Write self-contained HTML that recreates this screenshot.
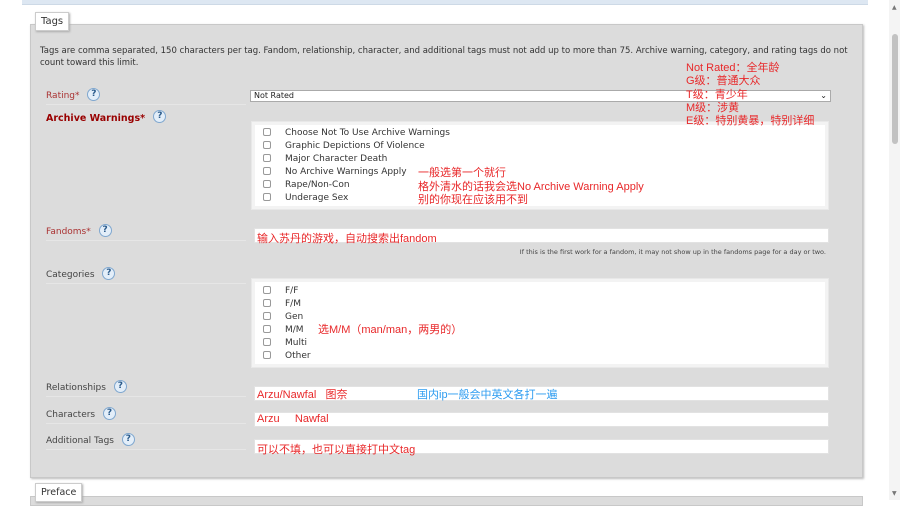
<!DOCTYPE html>
<html><head><meta charset="utf-8"><style>
*{margin:0;padding:0;box-sizing:border-box}
body{width:900px;height:500px;background:#fff;position:relative;overflow:hidden;font-family:"DejaVu Sans","Liberation Sans",sans-serif;color:#333}
.a{position:absolute}
.panel{left:30px;top:24px;width:833px;height:454px;background:#dcdcdc;border:1px solid #c8c8c8;box-shadow:1px 1px 2px #bbb}
.tab{background:#fff;border:1px solid #ccc;box-shadow:1px 1px 2px #aaa;font-size:10px;color:#333;padding:3px 5px}
.lbl{font-size:9px;color:#444;left:46px;width:200px;border-bottom:1px solid #e6e6e6;height:14px}
.q{display:inline-block;width:13px;height:13px;border-radius:50%;border:1px solid #7fa7cf;background:#e3eef9;color:#2a5a8a;font-size:9px;line-height:11px;text-align:center;font-weight:bold;vertical-align:top;margin-left:5px;margin-top:-3px}
.box{background:#fff;border:1px solid #e8e8e8;box-shadow:inset 0 0 0 3px #f3f3f3}
.inp{background:#fff;border:1px solid #e2e2e2;height:15px}
.cb{position:absolute;left:263px;width:8px;height:8px;border:1px solid #999;border-radius:2px;background:#fff}
.ct{position:absolute;left:285px;font-size:9px;color:#333;white-space:nowrap}
.r{color:#e8282a;font-family:"Liberation Sans","Noto Sans CJK SC",sans-serif;font-size:11px;white-space:nowrap;position:absolute}
.b{color:#2d9cf0}
</style></head><body>
<div class="a" style="left:22px;top:0;width:846px;height:5px;background:#dde7f2;border-bottom:1px solid #cdd9e6"></div>
<div class="a" style="left:889px;top:0;width:11px;height:500px;background:#f4f4f4"></div>
<div class="a" style="left:892px;top:34px;width:6px;height:110px;background:#c2c2c2;border-radius:3px"></div>
<div class="a" style="left:892px;top:4px;font-size:6px;color:#777">▲</div>
<div class="a" style="left:892px;top:490px;font-size:6px;color:#777">▼</div>

<div class="a panel"></div>
<div class="a tab" style="left:35px;top:12px">Tags</div>

<div class="a" style="left:40px;top:45px;width:815px;font-size:8.5px;line-height:12px;color:#333">Tags are comma separated, 150 characters per tag. Fandom, relationship, character, and additional tags must not add up to more than 75. Archive warning, category, and rating tags do not count toward this limit.</div>

<div class="a lbl" style="top:91px;color:#a33">Rating* <span class="q">?</span></div>
<div class="a" style="left:250px;top:90px;width:581px;height:12px;background:#fff;border:1px solid #aaa;font-size:8px;padding-left:3px;line-height:10px;color:#222">Not Rated<span style="position:absolute;right:3px;top:0">⌄</span></div>

<div class="a lbl" style="top:113px;color:#900;font-weight:bold;font-size:9.5px;border:none">Archive Warnings* <span class="q" style="font-weight:bold">?</span></div>
<div class="a box" style="left:251px;top:121px;width:578px;height:89px"></div>
<div class="cb" style="top:128px"></div><div class="ct" style="top:128px">Choose Not To Use Archive Warnings</div>
<div class="cb" style="top:141px"></div><div class="ct" style="top:141px">Graphic Depictions Of Violence</div>
<div class="cb" style="top:154px"></div><div class="ct" style="top:154px">Major Character Death</div>
<div class="cb" style="top:167px"></div><div class="ct" style="top:167px">No Archive Warnings Apply</div>
<div class="cb" style="top:180px"></div><div class="ct" style="top:180px">Rape/Non-Con</div>
<div class="cb" style="top:193px"></div><div class="ct" style="top:193px">Underage Sex</div>

<div class="r" style="left:686px;top:62px;line-height:13.3px">Not Rated：全年龄<br>G级：普通大众<br>T级：青少年<br>M级：涉黄<br>E级：特别黄暴，特别详细</div>
<div class="r" style="left:418px;top:167px;line-height:13.5px">一般选第一个就行<br>格外清水的话我会选No Archive Warning Apply<br>别的你现在应该用不到</div>

<div class="a lbl" style="top:227px;color:#a33">Fandoms* <span class="q">?</span></div>
<div class="a inp" style="left:254px;top:228px;width:575px"></div>
<div class="r" style="left:257px;top:230px">输入苏丹的游戏，自动搜索出fandom</div>
<div class="a" style="right:74px;top:248px;font-size:6.5px;color:#444">If this is the first work for a fandom, it may not show up in the fandoms page for a day or two.</div>

<div class="a lbl" style="top:270px">Categories <span class="q">?</span></div>
<div class="a box" style="left:251px;top:278px;width:578px;height:90px"></div>
<div class="cb" style="top:286px"></div><div class="ct" style="top:286px">F/F</div>
<div class="cb" style="top:299px"></div><div class="ct" style="top:299px">F/M</div>
<div class="cb" style="top:312px"></div><div class="ct" style="top:312px">Gen</div>
<div class="cb" style="top:325px"></div><div class="ct" style="top:325px">M/M</div>
<div class="cb" style="top:338px"></div><div class="ct" style="top:338px">Multi</div>
<div class="cb" style="top:351px"></div><div class="ct" style="top:351px">Other</div>
<div class="r" style="left:318px;top:321px">选M/M（man/man，两男的）</div>

<div class="a lbl" style="top:383px">Relationships <span class="q">?</span></div>
<div class="a inp" style="left:254px;top:386px;width:575px"></div>
<div class="r" style="left:257px;top:386px">Arzu/Nawfal &nbsp;&nbsp;图奈</div>
<div class="r b" style="left:417px;top:386px">国内ip一般会中英文各打一遍</div>

<div class="a lbl" style="top:410px">Characters <span class="q">?</span></div>
<div class="a inp" style="left:254px;top:412px;width:575px"></div>
<div class="r" style="left:257px;top:413px">Arzu &nbsp;&nbsp;&nbsp;&nbsp;Nawfal</div>

<div class="a lbl" style="top:436px">Additional Tags <span class="q">?</span></div>
<div class="a inp" style="left:254px;top:439px;width:575px"></div>
<div class="r" style="left:257px;top:441px">可以不填，也可以直接打中文tag</div>

<div class="a" style="left:30px;top:496px;width:833px;height:10px;background:#dcdcdc;border:1px solid #c8c8c8"></div>
<div class="a tab" style="left:35px;top:483px;font-size:9.5px">Preface</div>
</body></html>
